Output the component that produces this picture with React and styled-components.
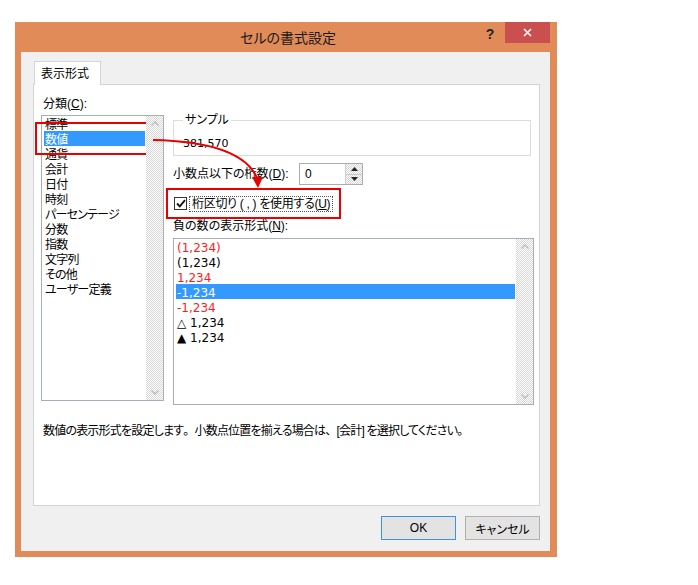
import styled, { createGlobalStyle } from 'styled-components';

const GlobalStyle = createGlobalStyle`
  html, body {
    margin: 0;
    background: #fff;
  }
  body {
    font-family: "Liberation Sans", "Noto Sans CJK JP", sans-serif;
    font-size: 12px;
    color: #000;
    font-feature-settings: "palt";
  }
`;

const dither = `
  background: repeating-conic-gradient(#ffffff 0 25%, #d6d6d6 0 50%) 0 0 / 2px 2px;
`;

const numberFont = `"DejaVu Sans", "Noto Sans CJK JP", sans-serif`;

// Layout
const Page = styled.div`
  width: 698px;
  height: 585px;
  box-sizing: border-box;
  padding: 22px 0 0 15px;
`;

const Dialog = styled.div`
  position: relative;
  width: 542px;
  height: 535px;
  box-sizing: border-box;
  display: flex;
  flex-direction: column;
  background: #e08b58;
  padding: 0 7px 6px 6px;
`;

const TitleBar = styled.div`
  height: 30px;
  display: flex;
  align-items: flex-start;
`;

const Title = styled.div`
  flex: 1;
  padding-left: 75px;
  text-align: center;
  font-size: 14px;
  line-height: 32px;
  color: #1a1a1a;
`;

const Help = styled.div`
  width: 20px;
  text-align: center;
  font-weight: bold;
  font-size: 14px;
  line-height: 24px;
  color: #222;
  margin-right: 5px;
`;

const Close = styled.div`
  width: 45px;
  height: 21px;
  background: #c9504f;
  display: flex;
  align-items: center;
  justify-content: center;
`;

const Body = styled.div`
  flex: 1;
  background: #f0f0f0;
  padding: 9px 10px 10px 12px;
  display: flex;
  flex-direction: column;
`;

const TabStrip = styled.div`
  height: 24px;
  display: flex;
  margin-left: 1px;
  margin-bottom: -1px;
  position: relative;
  z-index: 1;
`;

const Tab = styled.div`
  width: 67px;
  box-sizing: border-box;
  border: 1px solid #d4d4d4;
  border-bottom: none;
  background: #fff;
  padding: 1px 0 0 6px;
  line-height: 23px;
`;

const Panel = styled.div`
  height: 422px;
  box-sizing: border-box;
  background: #fff;
  border: 1px solid #d4d4d4;
  padding: 10px 5px 0 7px;
`;

const Columns = styled.div`
  display: grid;
  grid-template-columns: 123px 361px;
  column-gap: 9px;
`;

const Column = styled.div`
  display: flex;
  flex-direction: column;
`;

const Label = styled.div`
  line-height: ${({ $lh }) => $lh || 15}px;
  margin-left: ${({ $indent }) => $indent || 0}px;
  margin-top: ${({ $top }) => $top || 0}px;
  width: ${({ $width }) => ($width ? `${$width}px` : 'auto')};
  flex-shrink: 0;
  white-space: nowrap;
`;

const SampleValue = styled.div`
  font-family: ${numberFont};
  font-size: 11px;
  line-height: 15px;
  padding-top: 2px;
  margin-left: 1px;
`;

// List boxes
const ListBox = styled.div`
  height: ${({ $height }) => $height}px;
  margin-top: ${({ $top }) => $top}px;
  box-sizing: border-box;
  border: 1px solid #a9aeb6;
  background: #fff;
  display: flex;
`;

const Items = styled.div`
  flex: 1;
  padding: 0 1px 0 2px;
  font-family: ${({ $numeric }) => ($numeric ? numberFont : 'inherit')};
  letter-spacing: ${({ $numeric }) => ($numeric ? '0' : '-0.8px')};
`;

const Item = styled.div`
  height: 15px;
  box-sizing: border-box;
  padding: 2px 0 0 1px;
  line-height: 15px;
  white-space: nowrap;
  color: ${({ $selected, $red }) => ($selected ? '#fff' : $red ? '#ff1a1a' : '#000')};
  background: ${({ $selected }) => ($selected ? '#3399ff' : 'transparent')};
  outline: ${({ $marked }) => ($marked ? '2px solid #e80000' : 'none')};
  outline-offset: 7px;
`;

const Scrollbar = styled.div`
  width: ${({ $width }) => $width}px;
  ${dither}
  display: flex;
  flex-direction: column;
  justify-content: space-between;
  align-items: center;
  padding: 5px 0;
  box-sizing: border-box;
`;

// Right side controls
const Group = styled.fieldset`
  margin: 18px 0 0;
  width: 358px;
  height: 43px;
  box-sizing: border-box;
  border: 1px solid #dcdcdc;
  padding: 6px 8px 0;

  legend {
    padding: 0 2px;
    margin-left: 1px;
    line-height: 15px;
  }
`;

const Row = styled.div`
  display: flex;
  align-items: center;
  margin-top: ${({ $top }) => $top}px;
  height: ${({ $height }) => $height}px;
`;

const Spinner = styled.div`
  width: 64px;
  height: 22px;
  box-sizing: border-box;
  border: 1px solid #abadb3;
  background: #fff;
  display: flex;
`;

const SpinValue = styled.div`
  flex: 1;
  padding-left: 5px;
  line-height: 20px;
`;

const SpinButtons = styled.div`
  width: 16px;
  display: flex;
  flex-direction: column;
  border-left: 1px solid #d0d0d0;
`;

const SpinButton = styled.div`
  flex: 1;
  ${dither}
  display: flex;
  align-items: center;
  justify-content: center;
  border-top: ${({ $lower }) => ($lower ? '1px solid #c8c8c8' : 'none')};
`;

const CheckRow = styled.div`
  display: inline-flex;
  align-self: flex-start;
  align-items: center;
  margin: 11px 0 0 1px;
  height: 15px;
  outline: 2px solid #e80000;
  outline-offset: 6px;
`;

const CheckBox = styled.div`
  width: 13px;
  height: 13px;
  box-sizing: border-box;
  border: 1px solid #333;
  background: #fff;
  display: flex;
  align-items: center;
  justify-content: center;
`;

const CheckLabel = styled.div`
  margin-left: 2px;
  padding: 1px 2px 0;
  border: 1px dotted #555;
  line-height: 13px;
  white-space: nowrap;
  letter-spacing: -0.3px;
`;

const Description = styled.div`
  margin: 19px 0 0 2px;
  line-height: 15px;
  white-space: nowrap;
  letter-spacing: -0.8px;
`;

const Wide = styled.span`
  font-feature-settings: normal;
`;

const Footer = styled.div`
  display: flex;
  justify-content: flex-end;
  gap: 9px;
  margin-top: 10px;
`;

const Button = styled.div`
  width: 75px;
  height: 24px;
  box-sizing: border-box;
  border: 1px solid ${({ $primary }) => ($primary ? '#3c94e0' : '#b0b0b0')};
  background: #e3e3e3;
  display: flex;
  align-items: center;
  justify-content: center;
`;

const Arrow = styled.svg`
  position: absolute;
  left: 130px;
  top: 110px;
  pointer-events: none;
`;

const Chevron = ({ up }) => (
  <svg width="8" height="5" viewBox="0 0 8 5">
    <path d={up ? 'M0.5 4.5 L4 1 L7.5 4.5' : 'M0.5 0.5 L4 4 L7.5 0.5'} fill="none" stroke="#bdbdbd" strokeWidth="1.4" />
  </svg>
);

const SpinTriangle = ({ up }) => (
  <svg width="7" height="4" viewBox="0 0 7 4">
    <path d={up ? 'M0 4 L3.5 0 L7 4 Z' : 'M0 0 L3.5 4 L7 0 Z'} fill="#222" />
  </svg>
);

const categories = ['標準', '数値', '通貨', '会計', '日付', '時刻', 'パーセンテージ', '分数', '指数', '文字列', 'その他', 'ユーザー定義'];

const negatives = [
  { text: '(1,234)', red: true },
  { text: '(1,234)' },
  { text: '1,234', red: true },
  { text: '-1,234', selected: true },
  { text: '-1,234', red: true },
  { text: '△ 1,234' },
  { text: '▲ 1,234' },
];

export default function App() {
  return (
    <>
      <GlobalStyle />
      <Page>
        <Dialog>
          <TitleBar>
            <Title>セルの書式設定</Title>
            <Help>?</Help>
            <Close>
              <svg width="9" height="9" viewBox="0 0 9 9">
                <path d="M1 1 L8 8 M8 1 L1 8" stroke="#fff" strokeWidth="1.6" />
              </svg>
            </Close>
          </TitleBar>

          <Body>
            <TabStrip>
              <Tab>表示形式</Tab>
            </TabStrip>
            <Panel>
              <Columns>
                <Column>
                  <Label $indent={2} $top={2}>分類(<u>C</u>):</Label>
                  <ListBox $height={286} $top={3}>
                    <Items>
                      {categories.map((c) => (
                        <Item key={c} $selected={c === '数値'} $marked={c === '数値'}>
                          {c}
                        </Item>
                      ))}
                    </Items>
                    <Scrollbar $width={17}>
                      <Chevron up />
                      <Chevron />
                    </Scrollbar>
                  </ListBox>
                </Column>

                <Column>
                  <Group>
                    <legend>サンプル</legend>
                    <SampleValue>381,570</SampleValue>
                  </Group>
                  <Row $top={7} $height={22}>
                    <Label $width={126}>小数点以下の桁数(<u>D</u>):</Label>
                    <Spinner>
                      <SpinValue>0</SpinValue>
                      <SpinButtons>
                        <SpinButton>
                          <SpinTriangle up />
                        </SpinButton>
                        <SpinButton $lower>
                          <SpinTriangle />
                        </SpinButton>
                      </SpinButtons>
                    </Spinner>
                  </Row>
                  <CheckRow>
                    <CheckBox>
                      <svg width="10" height="9" viewBox="0 0 10 9">
                        <path d="M1 4.5 L3.8 7.3 L9 1.2" fill="none" stroke="#111" strokeWidth="1.8" />
                      </svg>
                    </CheckBox>
                    <CheckLabel>桁区切り ( , ) を使用する(<u>U</u>)</CheckLabel>
                  </CheckRow>
                  <Label $top={9} $lh={13}>負の数の表示形式(<u>N</u>):</Label>
                  <ListBox $height={167} $top={5}>
                    <Items $numeric>
                      {negatives.map((n, i) => (
                        <Item key={i} $red={n.red} $selected={n.selected}>
                          {n.text}
                        </Item>
                      ))}
                    </Items>
                    <Scrollbar $width={17}>
                      <Chevron up />
                      <Chevron />
                    </Scrollbar>
                  </ListBox>
                </Column>
              </Columns>
              <Description>
                数値の表示形式を設定します<Wide>。</Wide>小数点位置を揃える場合は<Wide>、</Wide>[会計] を選択してください。
              </Description>
            </Panel>
            <Footer>
              <Button $primary>OK</Button>
              <Button>キャンセル</Button>
            </Footer>
          </Body>

          <Arrow width="140" height="70" viewBox="0 0 140 70">
            <path d="M8 8 C55 9, 100 18, 112 46" fill="none" stroke="#e80000" strokeWidth="2" />
            <polygon points="107,45 118,45 113,56" fill="#e80000" />
          </Arrow>
        </Dialog>
      </Page>
    </>
  );
}
